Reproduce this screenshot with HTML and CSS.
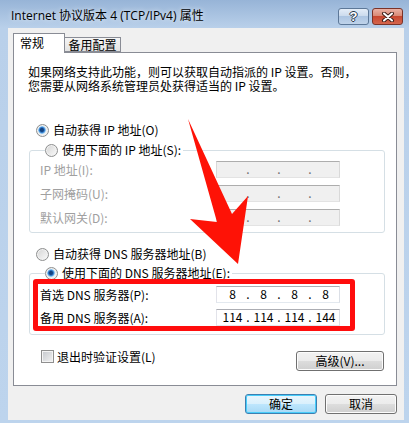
FILE: index.html
```html
<!DOCTYPE html>
<html lang="zh-CN">
<head>
  <meta charset="UTF-8" />
  <title>Internet 协议版本 4 (TCP/IPv4) 属性</title>
  <link rel="stylesheet" href="styles.css">
</head>
<body>
  <div class="window">
    <div class="titlebar">
      <span class="title">Internet 协议版本 4 (TCP/IPv4) 属性</span>
      <div class="caption-buttons">
        <button class="cap help">?</button>
        <button class="cap close">
          <svg width="14" height="10" viewBox="0 0 14 10">
            <path d="M3 1.5 L11 8.5 M11 1.5 L3 8.5" stroke="#3b1d18" stroke-width="4" stroke-linecap="round"/>
            <path d="M3 1.5 L11 8.5 M11 1.5 L3 8.5" stroke="#fff" stroke-width="2" stroke-linecap="round"/>
          </svg>
        </button>
      </div>
    </div>

    <div class="client">
      <div class="tabs">
        <div class="tab active">常规</div>
        <div class="tab">备用配置</div>
      </div>

      <div class="panel">
        <p class="intro">如果网络支持此功能，则可以获取自动指派的 IP 设置。否则，<br>您需要从网络系统管理员处获得适当的 IP 设置。</p>

        <label class="radio-row first"><span class="radio checked"></span>自动获得 IP 地址(O)</label>

        <fieldset class="group ip-group">
          <legend><label class="radio-row"><span class="radio"></span>使用下面的 IP 地址(S):</label></legend>
          <div class="field disabled">
            <span class="field-label">IP 地址(I):</span>
            <div class="ipbox"><span class="oct"></span><span class="dot">.</span><span class="oct"></span><span class="dot">.</span><span class="oct"></span><span class="dot">.</span><span class="oct"></span></div>
          </div>
          <div class="field disabled">
            <span class="field-label">子网掩码(U):</span>
            <div class="ipbox"><span class="oct"></span><span class="dot">.</span><span class="oct"></span><span class="dot">.</span><span class="oct"></span><span class="dot">.</span><span class="oct"></span></div>
          </div>
          <div class="field disabled">
            <span class="field-label">默认网关(D):</span>
            <div class="ipbox"><span class="oct"></span><span class="dot">.</span><span class="oct"></span><span class="dot">.</span><span class="oct"></span><span class="dot">.</span><span class="oct"></span></div>
          </div>
        </fieldset>

        <label class="radio-row dns-auto"><span class="radio"></span>自动获得 DNS 服务器地址(B)</label>

        <fieldset class="group dns-group">
          <legend><label class="radio-row"><span class="radio checked"></span>使用下面的 DNS 服务器地址(E):</label></legend>
          <div class="field">
            <span class="field-label">首选 DNS 服务器(P):</span>
            <div class="ipbox"><span class="oct">8</span><span class="dot">.</span><span class="oct">8</span><span class="dot">.</span><span class="oct">8</span><span class="dot">.</span><span class="oct">8</span></div>
          </div>
          <div class="field">
            <span class="field-label">备用 DNS 服务器(A):</span>
            <div class="ipbox"><span class="oct">114</span><span class="dot">.</span><span class="oct">114</span><span class="dot">.</span><span class="oct">114</span><span class="dot">.</span><span class="oct">144</span></div>
          </div>
        </fieldset>

        <div class="panel-bottom">
          <label class="check-row"><span class="checkbox"></span>退出时验证设置(L)</label>
          <button class="btn advanced">高级(V)...</button>
        </div>
      </div>

      <div class="footer">
        <button class="btn default">确定</button>
        <button class="btn">取消</button>
      </div>
    </div>

    <!-- red markup drawn over the dialog -->
    <div class="highlight"></div>
    <svg class="arrow" width="409" height="423" viewBox="0 0 409 423">
      <polygon points="188,119 232,214 248,196 238,264 190,219 217,222" fill="#fe1206"/>
    </svg>
  </div>
</body>
</html>
```

FILE: styles.css
```css
* {
  box-sizing: border-box;
}

body {
  margin: 0;
  width: 409px;
  height: 423px;
  overflow: hidden;
  font: 12px/16px "Noto Sans CJK SC", sans-serif;
  color: #000;
}

.window {
  position: relative;
  width: 409px;
  height: 423px;
  padding: 0 5px 3px 8px;
  display: flex;
  flex-direction: column;
  background: linear-gradient(#97b4d7 0, #b9d0ea 28px, #bdd4ed 100%);
}

/* title bar */
.titlebar {
  height: 28px;
  display: flex;
  justify-content: space-between;
  align-items: flex-start;
}

.title {
  margin: 8px 0 0 3px;
  font: 12px/16px "Open Sans", "Noto Sans CJK SC", sans-serif;
  text-shadow: 0 0 5px rgba(255,255,255,0.9);
}

.caption-buttons {
  display: flex;
  gap: 3px;
  margin: 8px 1px 0 0;
}

.cap {
  height: 17px;
  padding: 0;
  border-radius: 3px;
  display: flex;
  align-items: center;
  justify-content: center;
}

.help {
  width: 31px;
  border: 1px solid #5d7898;
  background: linear-gradient(#e4edf8, #c9d9ec 50%, #adc5e2 50%, #bfd3ea);
  color: #fff;
  font: bold 13px/15px "Liberation Sans", sans-serif;
  text-shadow: 1px 0 0 #26364a, -1px 0 0 #26364a, 0 1px 0 #26364a, 0 -1px 0 #26364a;
}

.close {
  width: 31px;
  border: 1px solid #7b3328;
  background: linear-gradient(#eab1a4, #d98a76 45%, #c8472f 50%, #d4664e);
}

/* dialog body */
.client {
  flex: 1;
  background: #f0f0f0;
  padding: 5px 7px 0 5px;
}

.tabs {
  display: flex;
  align-items: flex-start;
  margin-bottom: -1px;
  position: relative;
  z-index: 1;
}

.tab {
  border: 1px solid #898c95;
}

.tab.active {
  width: 52px;
  height: 20px;
  line-height: 18px;
  padding-left: 6px;
  border-bottom: 0;
  background: #fff;
}

.tab:not(.active) {
  width: 56px;
  height: 15px;
  margin-top: 4px;
  border-left: 0;
  line-height: 13px;
  text-align: center;
  background: linear-gradient(#f5f5f5, #e3e3e3);
}

.panel {
  height: 334px;
  background: #fff;
  border: 1px solid #898c95;
  padding: 12px 0 0 14px;
}

.intro {
  margin: 0;
  line-height: 14px;
}

.radio-row {
  display: flex;
  align-items: center;
  gap: 4px;
  height: 16px;
  margin-left: 8px;
  white-space: nowrap;
}

.radio-row.first {
  margin-top: 29px;
}

.radio {
  width: 13px;
  height: 13px;
  border-radius: 50%;
  border: 1px solid #8e8f8f;
  background: linear-gradient(135deg, #d4d4d4, #fbfbfb);
  box-shadow: inset 0 0 0 1px #f2f2f2;
}

.radio.checked {
  background: radial-gradient(circle at 45% 45%, #15427f 0 1.5px, #2f78c9 2.5px, #84c1ef 3.5px, #cfe6f7 4px, transparent 4.5px),
              linear-gradient(135deg, #d4d4d4, #fbfbfb);
}

.group {
  width: 356px;
  margin: 0 0 0 1px;
  padding: 0 0 6px 10px;
  border: 1px solid #d5dfe5;
  border-radius: 3px;
}

.group legend {
  padding: 0 2px 0 0;
  margin-left: 5px;
}

.group legend .radio-row {
  margin-left: 0;
}

.ip-group {
  margin-top: 4px;
  padding-top: 3px;
}

.dns-auto {
  margin-top: 13px;
}

.dns-group {
  margin-top: 3px;
  padding-top: 5px;
  padding-bottom: 8px;
}

.field {
  display: flex;
  align-items: center;
  height: 17px;
  margin-bottom: 7px;
}

.dns-group .field {
  margin-bottom: 6px;
}

.field:last-child {
  margin-bottom: 0;
}

.field-label {
  width: 176px;
  white-space: nowrap;
}

.field.disabled .field-label {
  color: #a0a0a0;
}

.ipbox {
  width: 124px;
  height: 17px;
  display: flex;
  padding-left: 2px;
  border: 1px solid;
  border-color: #abadb3 #dbdfe6 #e3e9ef #e2e3ea;
  background: #fff;
  line-height: 14px;
}

.field.disabled .ipbox {
  background: #f0f0f0;
  border-color: #adadad #d9d9d9 #e3e3e3 #d9d9d9;
  color: #6d6d6d;
}

.oct {
  width: 27px;
  text-align: center;
}

.dot {
  width: 4px;
  text-align: center;
}

.panel-bottom {
  display: flex;
  justify-content: space-between;
  align-items: flex-start;
  margin-top: 15px;
  padding-right: 12px;
}

.check-row {
  display: flex;
  align-items: center;
  gap: 3px;
  margin-left: 13px;
  line-height: 13px;
}

.checkbox {
  width: 13px;
  height: 13px;
  border: 1px solid #8f8f8f;
  background: linear-gradient(135deg, #c4c7cc, #f3f3f3);
  box-shadow: inset 0 0 0 1px #f4f4f4;
}

.btn {
  height: 20px;
  padding: 0;
  border: 1px solid #707070;
  border-radius: 3px;
  background: linear-gradient(#f2f2f2, #ebebeb 50%, #dddddd 50%, #cfcfcf);
  box-shadow: inset 0 0 0 1px #fcfcfc;
  font: 12px/16px "Noto Sans CJK SC", sans-serif;
  color: #000;
}

.advanced {
  width: 88px;
  margin-top: 1px;
}

.footer {
  display: flex;
  justify-content: flex-end;
  gap: 8px;
  margin-top: 8px;
}

.footer .btn {
  width: 72px;
}

.btn.default {
  border-color: #3c7fb1;
  background: linear-gradient(#eaf6fd, #d9f0fc 50%, #bee6fd 50%, #a7d9f5);
  box-shadow: inset 0 0 0 1px #48cdfa;
}

/* markup layer */
.highlight {
  position: absolute;
  left: 33px;
  top: 279px;
  width: 322px;
  height: 52px;
  border: 5px solid #ff0d0d;
  border-radius: 3px;
}

.arrow {
  position: absolute;
  left: 0;
  top: 0;
  pointer-events: none;
}
```
